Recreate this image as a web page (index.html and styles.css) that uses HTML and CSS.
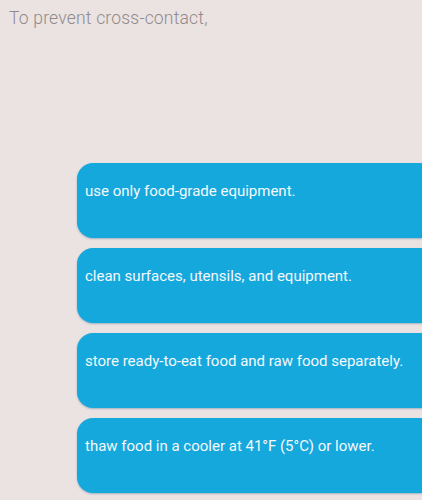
FILE: index.html
```html
<!DOCTYPE html>
<html>
<head>
    <meta charset="UTF-8" />
    <meta name="viewport" content="width=device-width, initial-scale=1.0" />
    <title>Cross-contact</title>
    <link rel="stylesheet" href="styles.css">
</head>
<body>
    <div id="page">
        <p class="question">To prevent cross-contact,</p>
        <div class="options">
            <div class="option">use only food-grade equipment.</div>
            <div class="option">clean surfaces, utensils, and equipment.</div>
            <div class="option">store ready-to-eat food and raw food separately.</div>
            <div class="option">thaw food in a cooler at 41°F (5°C) or lower.</div>
        </div>
    </div>
</body>
</html>
```

FILE: styles.css
```css
html, body {
    margin: 0;
    padding: 0;
}

body {
    width: 422px;
    height: 500px;
    overflow: hidden;
    background: #ebe2e2;
    font-family: Roboto, "Liberation Sans", sans-serif;
}

#page {
    padding: 7px 0 0 9px;
}

.question {
    margin: 0;
    font-size: 17.5px;
    font-weight: 300;
    line-height: 22px;
    color: #8f8b8b;
    letter-spacing: 0.2px;
}

/* options run off the right side, so only the left corners are rounded */
.options {
    display: flex;
    flex-direction: column;
    gap: 10px;
    margin: 134px 0 0 68px;
}

.option {
    height: 75px;
    box-sizing: border-box;
    padding: 18px 8px 0;
    border-radius: 16px 0 0 16px;
    background: #15a8dd;
    box-shadow: 0 1px 2px rgba(20, 90, 130, 0.35);
    color: #f4f8fb;
    font-size: 15px;
    line-height: 20px;
}
```
